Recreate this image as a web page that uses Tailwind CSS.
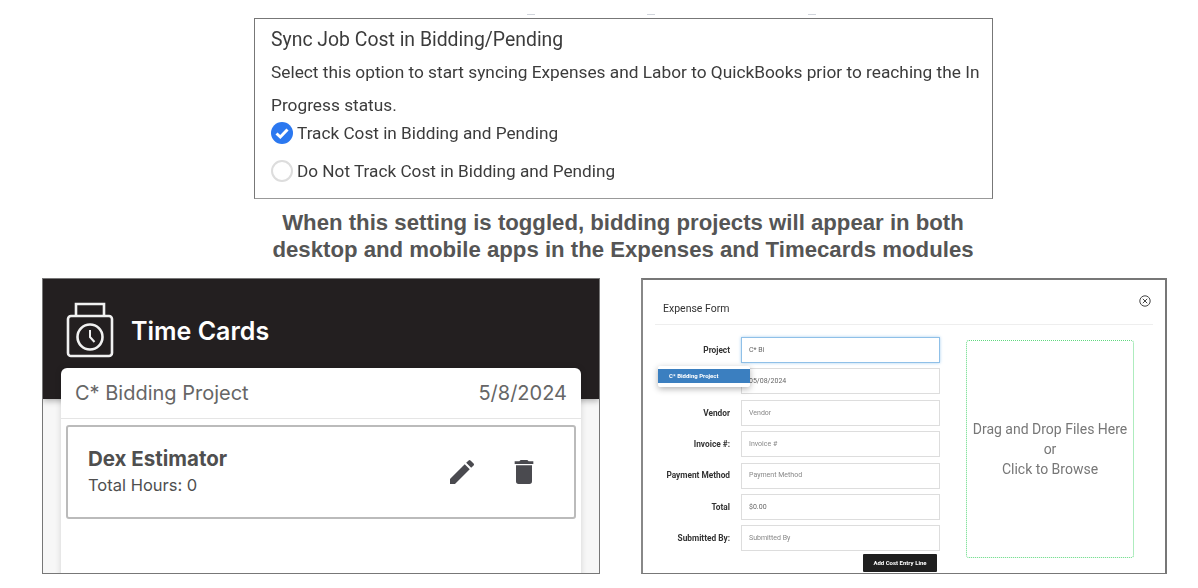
<!DOCTYPE html>
<html lang="en">
<head>
  <meta charset="UTF-8" />
  <title>Sync Job Cost in Bidding/Pending</title>
  <script src="https://cdn.jsdelivr.net/npm/@tailwindcss/browser@4"></script>
</head>
<body class="bg-white w-[1198px] h-[588px] overflow-hidden font-['Roboto',sans-serif]">

  <!-- cropped text remnants above the settings box -->
  <div class="flex h-[18px] pt-[14px]">
    <span class="ml-[527px] w-[8px] h-px bg-gray-300"></span>
    <span class="ml-[112px] w-[8px] h-px bg-gray-300"></span>
    <span class="ml-[153px] w-[8px] h-px bg-gray-300"></span>
  </div>

  <!-- Settings box -->
  <section class="ml-[254px] w-[739px] h-[181px] border border-[#777] border-b-[#999] pl-4 pt-[8px] text-[#3c3c3c] blur-[0.3px]">
    <h2 class="text-[19.4px] leading-[26px]">Sync Job Cost in Bidding/Pending</h2>
    <p class="mt-[3px] text-[17.3px] leading-[32.5px] w-[716px]">Select this option to start syncing Expenses and Labor to QuickBooks prior to reaching the In Progress status.</p>
    <div class="flex items-center gap-[4px] text-[17.2px] leading-[24px]">
      <svg class="w-[22px] h-[22px]" viewBox="0 0 22 22">
        <circle cx="11" cy="11" r="11" fill="#2b78f0"/>
        <path d="M5.5 11.5l3.8 3.5L16.5 7.5" fill="none" stroke="#fff" stroke-width="3"/>
      </svg>
      <span>Track Cost in Bidding and Pending</span>
    </div>
    <div class="flex items-center gap-[4px] text-[17.2px] leading-[24px] mt-[14px]">
      <span class="w-[22px] h-[22px] rounded-full border-2 border-[#ddd]"></span>
      <span>Do Not Track Cost in Bidding and Pending</span>
    </div>
  </section>

  <!-- Caption -->
  <p class="mt-[10px] ml-[23px] w-[1200px] text-center font-['Liberation_Sans',sans-serif] font-bold text-[22.2px] leading-[27px] text-[#555]">
    When this setting is toggled, bidding projects will appear in both<br>desktop and mobile apps in the Expenses and Timecards modules
  </p>

  <div class="flex mt-[15px] ml-[42px] gap-[41px]">

    <!-- Time Cards mobile screenshot -->
    <section class="w-[558px] h-[296px] border border-[#777] bg-[#f7f7f7] overflow-hidden font-['Inter',sans-serif]">
      <header class="h-[120px] bg-[#231f20] flex items-start pl-[23px] pt-[23px] gap-[17px] shadow-[0_2px_6px_rgba(0,0,0,0.3)]">
        <svg class="w-[48px] h-[56px]" viewBox="0 0 48 56" fill="none" stroke="#f1f1f1" stroke-width="2.6">
          <path d="M10 15V2h28v13"/>
          <rect x="2" y="14" width="44" height="40" rx="3"/>
          <circle cx="24" cy="35" r="12.5"/>
          <path d="M24 28v7l4.5 5" stroke-width="2"/>
        </svg>
        <h1 class="text-white font-semibold text-[25px] leading-[30px] mt-[14px]">Time Cards</h1>
      </header>
      <div class="relative -mt-[31px] ml-[18px] w-[520px] h-[210px] bg-white rounded-t-[6px] shadow-[0_0_6px_rgba(0,0,0,0.15)]">
        <div class="h-[51px] flex items-center justify-between px-[14px] border-b border-[#e5e5e5] text-[#666] text-[20px]">
          <span>C* Bidding Project</span>
          <span>5/8/2024</span>
        </div>
        <div class="mt-[6px] mx-[5px] h-[94px] border-2 border-[#bbb] rounded-[3px] flex items-center pl-[20px]">
          <div class="flex-1 text-[#4f4f4f]">
            <div class="font-bold text-[20.5px] leading-[26px]">Dex Estimator</div>
            <div class="text-[16.5px] leading-[26px]">Total Hours: 0</div>
          </div>
          <svg class="w-[32px] h-[32px] mr-[30px]" viewBox="0 0 24 24" fill="#4a4a4f">
            <path d="M3 17.25V21h3.75L17.81 9.94l-3.75-3.75L3 17.25zM20.71 7.04a1 1 0 0 0 0-1.41l-2.34-2.34a1 1 0 0 0-1.41 0l-1.83 1.83 3.75 3.75 1.83-1.83z"/>
          </svg>
          <svg class="w-[32px] h-[32px] mr-[34px]" viewBox="0 0 24 24" fill="#4a4a4f">
            <path d="M6 19a2 2 0 0 0 2 2h8a2 2 0 0 0 2-2V7H6v12zM19 4h-3.5l-1-1h-5l-1 1H5v2h14V4z"/>
          </svg>
        </div>
      </div>
    </section>

    <!-- Expense Form screenshot -->
    <section class="relative w-[526px] h-[296px] border-2 border-[#777] border-b border-l-[#888] bg-white overflow-hidden">
      <div class="blur-[0.4px]">
        <div class="mx-[12px] h-[45px] border-b border-[#eee] flex justify-between pl-[8px] pt-[22px] text-[#333] text-[10.5px] leading-[14px]">
          <span>Expense Form</span>
          <svg class="w-[12px] h-[12px] -mt-[7px] mr-[2px]" viewBox="0 0 12 12" fill="none" stroke="#444" stroke-width="1">
            <circle cx="6" cy="6" r="5.2"/>
            <path d="M3.8 3.8l4.4 4.4M8.2 3.8l-4.4 4.4"/>
          </svg>
        </div>
        <div class="flex">
          <div class="w-[298px] pt-[12px] flex flex-col gap-[5.4px] text-[7px] text-[#666]">
            <div class="flex items-center">
              <label class="w-[87px] text-right font-bold text-[8.3px] text-[#333]">Project</label>
              <div class="ml-[11px] w-[199px] h-[26px] border border-[#8fc0e8] shadow-[0_0_3px_#a8d0f0] pl-[7px] flex items-center">C* Bi</div>
            </div>
            <div class="flex items-center">
              <label class="w-[87px]"></label>
              <div class="ml-[11px] w-[199px] h-[26px] border border-[#ddd] pl-[7px] flex items-center">05/08/2024</div>
            </div>
            <div class="flex items-center">
              <label class="w-[87px] text-right font-bold text-[8.3px] text-[#333]">Vendor</label>
              <div class="ml-[11px] w-[199px] h-[26px] border border-[#ddd] pl-[7px] flex items-center text-[#888]">Vendor</div>
            </div>
            <div class="flex items-center">
              <label class="w-[87px] text-right font-bold text-[8.3px] text-[#333]">Invoice #:</label>
              <div class="ml-[11px] w-[199px] h-[26px] border border-[#ddd] pl-[7px] flex items-center text-[#888]">Invoice #</div>
            </div>
            <div class="flex items-center">
              <label class="w-[87px] text-right font-bold text-[8.3px] text-[#333]">Payment Method</label>
              <div class="ml-[11px] w-[199px] h-[26px] border border-[#ddd] pl-[7px] flex items-center text-[#888]">Payment Method</div>
            </div>
            <div class="flex items-center">
              <label class="w-[87px] text-right font-bold text-[8.3px] text-[#333]">Total</label>
              <div class="ml-[11px] w-[199px] h-[26px] border border-[#ddd] pl-[7px] flex items-center">$0.00</div>
            </div>
            <div class="flex items-center">
              <label class="w-[87px] text-right font-bold text-[8.3px] text-[#333]">Submitted By:</label>
              <div class="ml-[11px] w-[199px] h-[26px] border border-[#ddd] pl-[7px] flex items-center text-[#888]">Submitted By</div>
            </div>
            <button class="ml-[220px] -mt-[3px] w-[74px] h-[18px] bg-[#1f1f1f] text-white font-bold text-[6px] rounded-[1px]">Add Cost Entry Line</button>
          </div>
          <div class="ml-[25px] mt-[15px] w-[168px] h-[218px] border border-dotted border-[#5fd97f] rounded-[3px] flex items-center justify-center text-center text-[#777] text-[14px] leading-[20px]">
            <p>Drag and Drop Files Here<br>or<br>Click to Browse</p>
          </div>
        </div>
      </div>
      <!-- autocomplete dropdown over the date field -->
      <div class="absolute left-[15px] top-[86px] w-[92px] h-[21px] pt-[3px] bg-white rounded-[2px] shadow-[0_2px_6px_rgba(0,0,0,0.3)] blur-[0.3px]">
        <div class="h-[14px] bg-[#3b7fc0] text-white font-bold text-[6px] leading-[14px] pl-[11px]">C* Bidding Project</div>
      </div>
    </section>
  </div>
</body>
</html>
